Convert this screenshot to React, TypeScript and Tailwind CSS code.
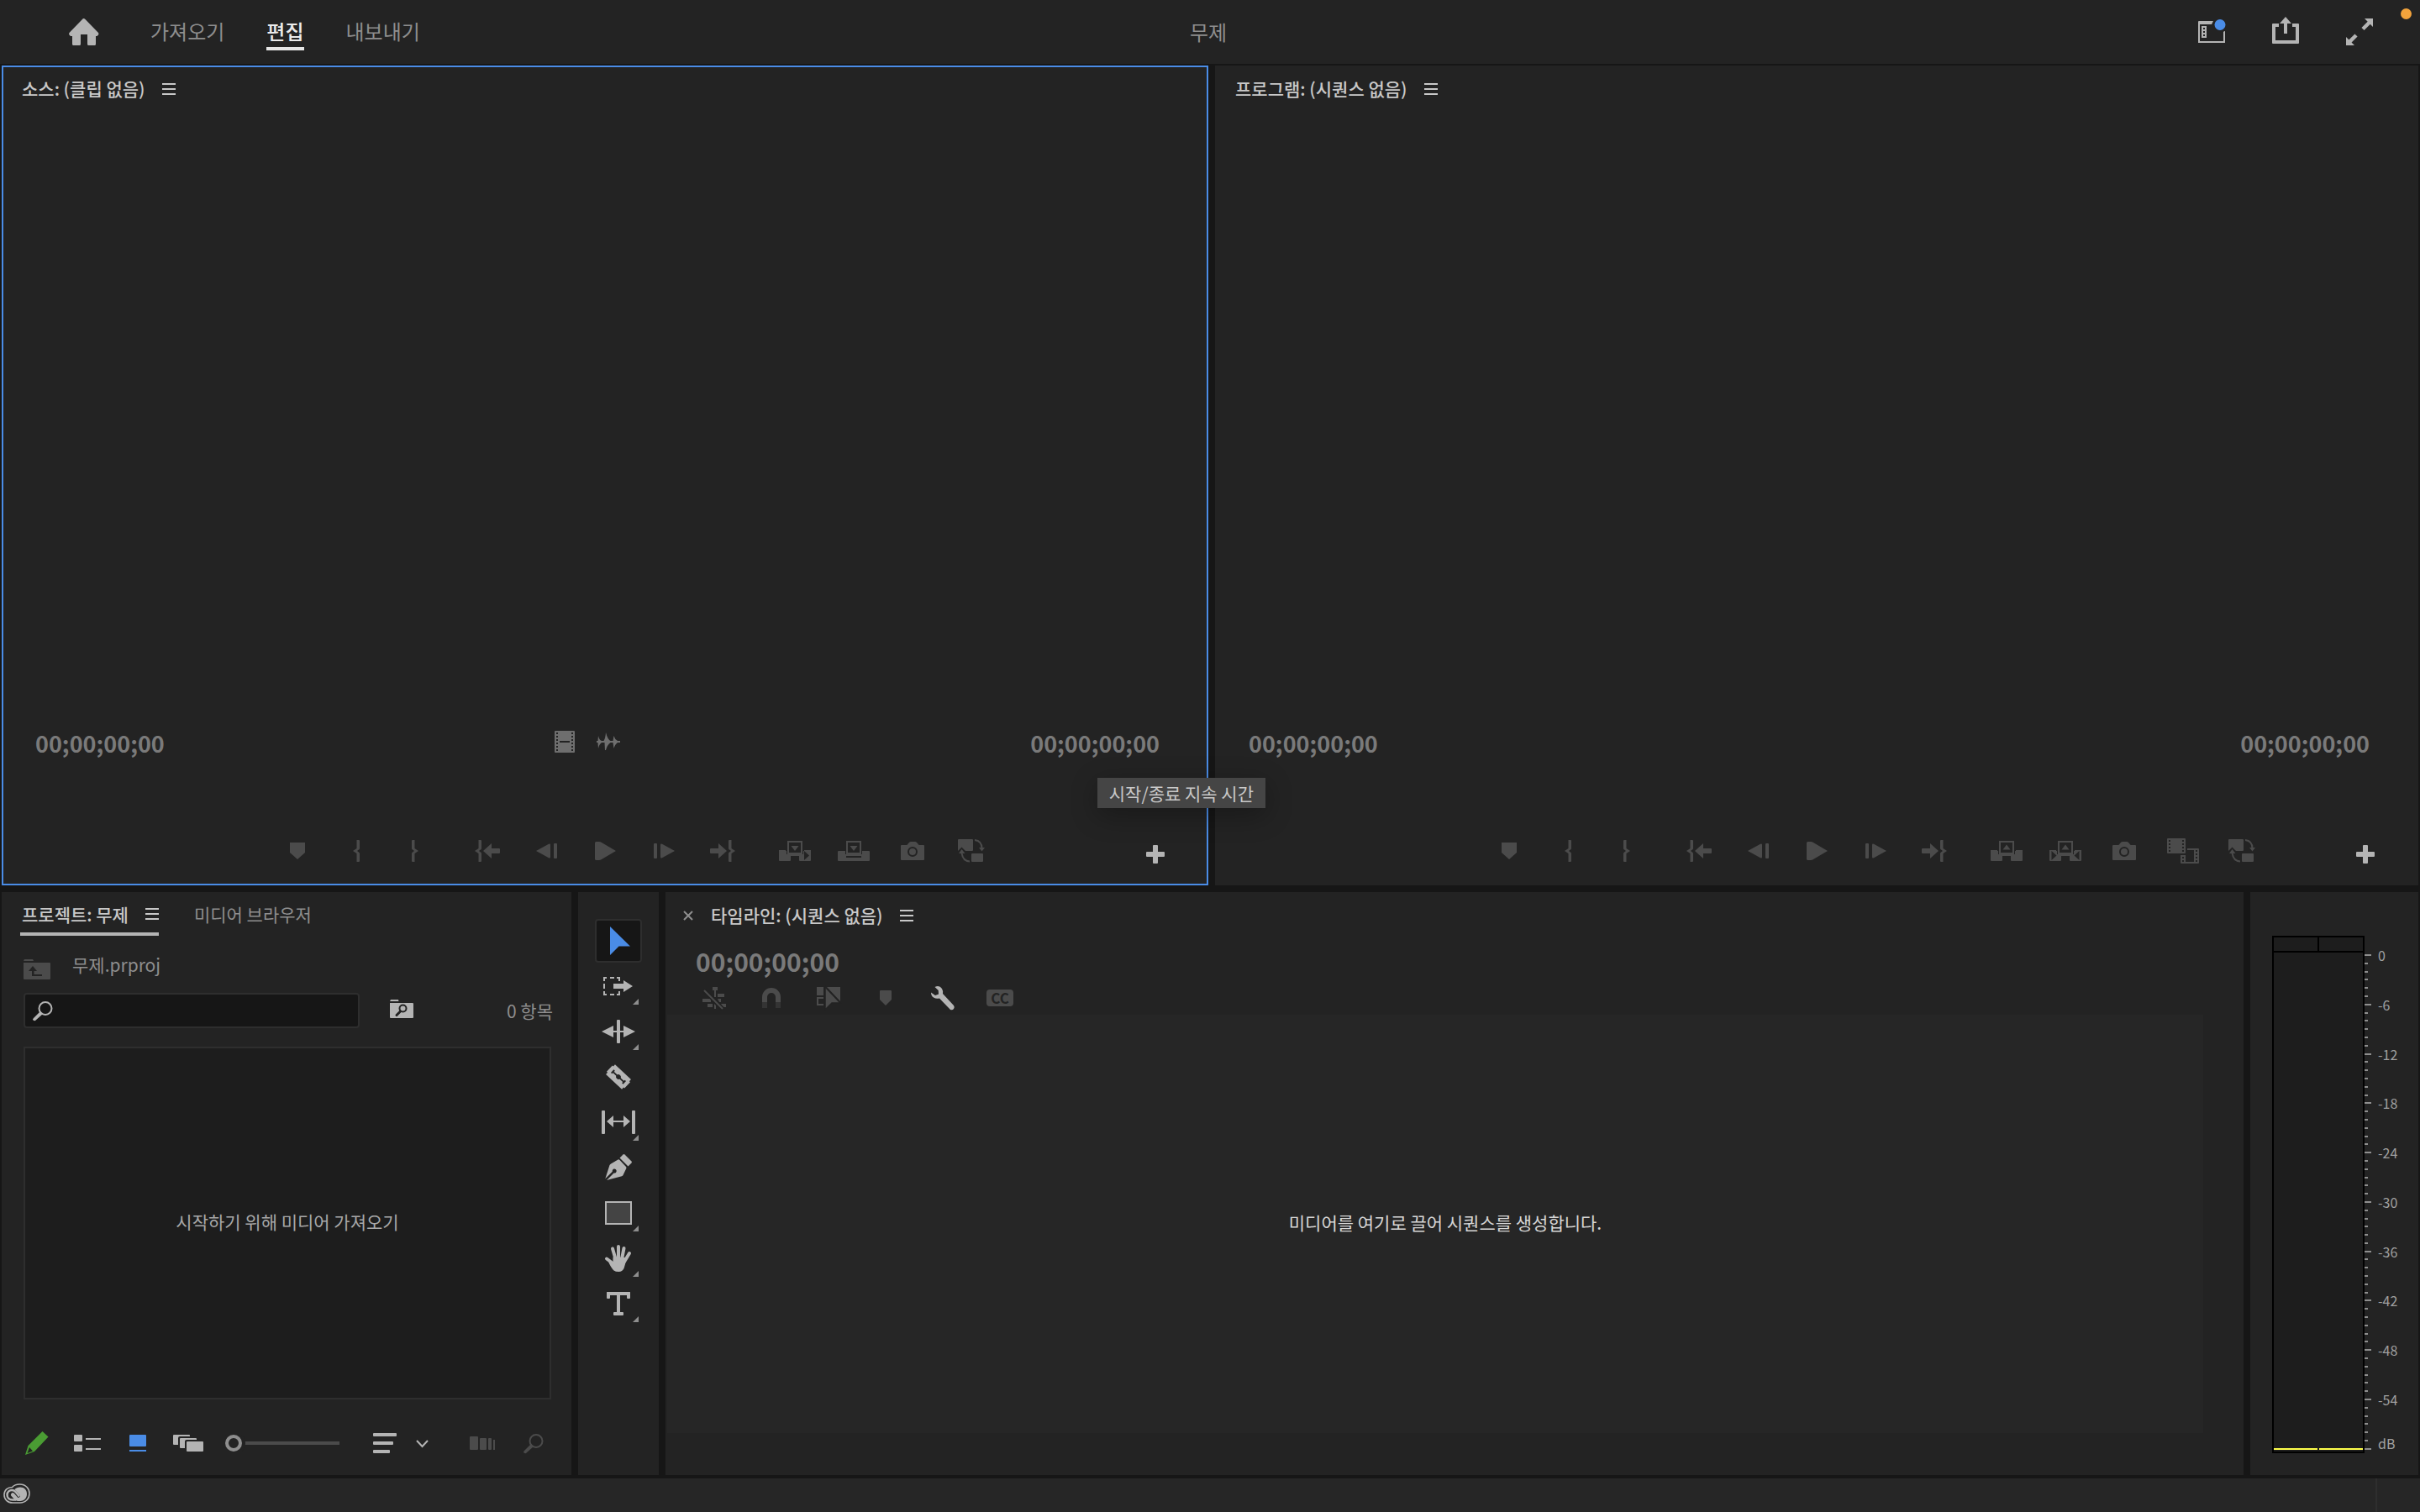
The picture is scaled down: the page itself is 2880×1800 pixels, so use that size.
import React, { useState } from 'react';

interface IconProps {
  w: number;
  h: number;
  children: React.ReactNode;
}

const Icon: React.FC<IconProps> = ({ w, h, children }) => (
  <svg width={w} height={h} viewBox={`0 0 ${w} ${h}`} fill="currentColor" className="shrink-0 overflow-visible" aria-hidden="true">
    {children}
  </svg>
);

const BG = '#232323';

/* ---------- Icons ---------- */

const HomeIcon = () => (
  <Icon w={36} h={32}>
    <path d="M17.5 0q1 0 2 1L35 17q1 1.500 0 2.500L33.500 21H32v9.500q0 1.500-1.500 1.500H23.500q-1.500 0-1.500-1.500V19h-8v11.500q0 1.500-1.500 1.500H5.500Q4 32 4 30.500V21H2L.5 19.500q-1-1 0-2.500L16 1q.7-1 1.500-1z" />
  </Icon>
);

const WorkspaceIcon = () => (
  <Icon w={32} h={26}>
    <path d="M1 0h17l-2 4H2v20h28V13q1-1 2-1v14H0V1q0-1 1-1z" />
    <path fillRule="evenodd" d="M4 6h6v14H4zM6 8v2h2V8zM6 12v2h2v-2zM6 16v2h2v-2z" />
    <circle cx="26" cy="4.500" r="6.500" fill="#4a8ce6" />
  </Icon>
);

const ShareIcon = () => (
  <Icon w={32} h={32}>
    <path d="M1 8h7v4H4v16h24V12h-4V8h7q1 0 1 1v22q0 1-1 1H1q-1 0-1-1V9q0-1 1-1z" />
    <path d="M16 0l7 8h-5v12h-4V8H9z" />
  </Icon>
);

const FullscreenIcon = () => (
  <Icon w={32} h={32}>
    <path d="M22 0h10v10zM0 22v10h10z" />
    <path d="M20 12.500L28.500 4M12 20l-8.500 8.500" stroke="currentColor" strokeWidth="4.500" />
  </Icon>
);

const MenuIcon = () => (
  <Icon w={16} h={14}>
    <path d="M0 0h16v2H0zM0 6h16v2H0zM0 12h16v2H0z" />
  </Icon>
);

const FilmIcon = () => (
  <Icon w={24} h={26}>
    <rect width="24" height="26" rx="1" />
    <g fill={BG}>
      {[2, 6, 10, 14, 18, 22].map((y) => (
        <React.Fragment key={y}>
          <rect x="2" y={y} width="2" height="2" />
          <rect x="20" y={y} width="2" height="2" />
        </React.Fragment>
      ))}
      <rect x="6" y="12" width="12" height="2" />
    </g>
  </Icon>
);

const WaveIcon = () => (
  <Icon w={28} h={22}>
    <path d="M0 10h1.500L2 4q1 5 4 6h2.500Q10.500 7 11 0q2 8 5.500 10h3L20.500 4q1 4 4.500 6h3v2h-3q-3 2-4.500 7l-1-7h-3Q12.500 15 11 21H10l-.5-9H6q-3 2-4 7l-.5-7H0z" />
  </Icon>
);

const MarkerIcon = () => (
  <Icon w={18} h={20}>
    <path d="M0 0h18v12l-9 8-9-8z" />
  </Icon>
);

const SmallMarkerIcon = () => (
  <Icon w={14} h={18}>
    <path d="M1 0h12q1 0 1 1v10l-7 7-7-7V1q0-1 1-1z" />
  </Icon>
);

const OPEN_BRACE = 'M4.500 0H7q1 0 1 1v9q0 1-1 1.500L5 13l2 1.500q1 .5 1 1.500v9q0 1-1 1H4.500V16L0 13l4.500-3z';
const CLOSE_BRACE = 'M1 0h2.500v10L8 13l-4.500 3v10H1q-1 0-1-1v-9q0-1 1-1.500L3 13l-2-1.500Q0 11 0 10V1q0-1 1-1z';

const InIcon = () => <Icon w={8} h={26}><path d={OPEN_BRACE} /></Icon>;
const OutIcon = () => <Icon w={8} h={26}><path d={CLOSE_BRACE} /></Icon>;

const GoInIcon = () => (
  <Icon w={30} h={26}>
    <path d={OPEN_BRACE} />
    <path d="M10 13l10-9v6h9q1 0 1 1v4q0 1-1 1h-9v6z" />
  </Icon>
);

const GoOutIcon = () => (
  <Icon w={30} h={26}>
    <path d={CLOSE_BRACE} transform="translate(22 0)" />
    <path d="M20 13L10 4v6H1q-1 0-1 1v4q0 1 1 1h9v6z" />
  </Icon>
);

const StepBackIcon = () => (
  <Icon w={25} h={18}>
    <path d="M0 9L15 .8q2-.8 2 1v14.400q0 1.800-2 1z" />
    <rect x="21" width="4" height="18" rx="1" />
  </Icon>
);

const StepForwardIcon = () => (
  <Icon w={25} h={18}>
    <path d="M25 9L10 .8q-2-.8-2 1v14.400q0 1.800 2 1z" />
    <rect width="4" height="18" rx="1" />
  </Icon>
);

const PlayIcon = () => (
  <Icon w={25} h={22}>
    <path d="M1.500 0H5q1.500 0 3 1l17 10L8 21q-1.500 1-3 1H1.500Q0 22 0 20.500v-19Q0 0 1.500 0z" />
  </Icon>
);

const BlocksIcon = ({ box, cuts }: { box: string; cuts?: string }) => (
  <Icon w={38} h={24}>
    <rect y="12" width="14" height="12" rx="1" />
    <rect x="24" y="12" width="14" height="12" rx="1" />
    <path d="M0 11h8v4H0zM30 11h8v4h-8z" />
    <rect x="9" y="10" width="20" height="6" fill={BG} />
    <path d="M10 14h18v4H10z" />
    <rect x="11" y="1" width="16" height="14" fill={BG} stroke="currentColor" strokeWidth="2" />
    <path d={box} />
    {cuts && <path d={cuts} fill={BG} />}
  </Icon>
);

const InsertIcon = () => <BlocksIcon box="M14.500 6h9L19 12z" cuts="M30 12l6 5.500-6 5.500z" />;
const LiftIcon = () => <BlocksIcon box="M14.500 10.500h9L19 4.500z" />;
const ExtractIcon = () => <BlocksIcon box="M14.500 10.500h9L19 4.500z" cuts="M2.500 12l6 5.500-6 5.500zM35.500 12l-6 5.500 6 5.500z" />;

const OverwriteIcon = () => (
  <Icon w={38} h={24}>
    <rect y="12" width="38" height="12" rx="1" />
    <rect x="9" y="10" width="20" height="6" fill={BG} />
    <rect x="11" y="1" width="16" height="14" fill={BG} stroke="currentColor" strokeWidth="2" />
    <path d="M14.500 6h9L19 12z" />
    <rect x="10" y="18" width="18" height="2" fill={BG} />
  </Icon>
);

const CameraIcon = () => (
  <Icon w={28} h={22}>
    <path d="M1 4h6q1 0 2-2l1-1q1-1 2-1h5q1 0 2 1l1 1q1 2 2 2h5q1 0 1 1v16q0 1-1 1H1q-1 0-1-1V5q0-1 1-1z" />
    <circle cx="14" cy="12" r="5" stroke={BG} strokeWidth="2" />
  </Icon>
);

const CompareIcon = () => (
  <Icon w={38} h={30}>
    <rect width="22" height="18" rx="1" />
    <path d="M24 12h13q1 0 1 1v16q0 1-1 1H17q-1 0-1-1v-9h6v8h10V14h-8z" />
    <g fill={BG}>
      {[2, 6, 10, 14].map((y) => (
        <React.Fragment key={y}>
          <rect x="2" y={y} width="2" height="2" />
          <rect x="18" y={y} width="2" height="2" />
          <rect x="34" y={y + 12} width="2" height="2" />
        </React.Fragment>
      ))}
      <rect x="18" y="22" width="2" height="2" />
      <rect x="18" y="26" width="2" height="2" />
    </g>
  </Icon>
);

const SwapIcon = () => (
  <Icon w={32} h={28}>
    <path d="M1 0h16q1 0 1 1v12q0 1-1 1H9L4.500 9.500 0 14V1q0-1 1-1z" />
    <rect x="16" y="17" width="14" height="10" rx="1" />
    <path d="M20 1q8.500 1 8.500 10M14 26.500Q5.500 26 4.500 16" fill="none" stroke="currentColor" strokeWidth="2" />
    <path d="M25 10h7l-3.500 4.500zM1 17h7.500L4.500 12z" />
  </Icon>
);

const PlusIcon = () => (
  <Icon w={22} h={22}>
    <path d="M9 0h4q1 0 1 1v7h7q1 0 1 1v4q0 1-1 1h-7v7q0 1-1 1H9q-1 0-1-1v-7H1q-1 0-1-1V9q0-1 1-1h7V1q0-1 1-1z" />
  </Icon>
);

const SearchIcon = () => (
  <Icon w={24} h={23}>
    <circle cx="15" cy="8.500" r="7.500" fill="none" stroke="currentColor" strokeWidth="2" />
    <path d="M9 12l3 3-9 8q-2 .5-3-1 0-1 1-2z" />
  </Icon>
);

const FolderUpIcon = () => (
  <Icon w={32} h={24}>
    <path d="M1 0h10l1 2H0zM0 4h31q1 0 1 1v18q0 1-1 1H1q-1 0-1-1z" />
    <path d="M6 14l5-6 5 6h-3.500v4H22v2H10v-6z" fill={BG} />
  </Icon>
);

const FolderSearchIcon = () => (
  <Icon w={28} h={22}>
    <path d="M1 0h9l.5 2H0zM0 4h27q1 0 1 1v16q0 1-1 1H1q-1 0-1-1z" />
    <circle cx="15.500" cy="10.500" r="4" fill="none" stroke={BG} strokeWidth="2" />
    <path d="M12.500 14L8 18.500" stroke={BG} strokeWidth="3" strokeLinecap="round" />
  </Icon>
);

const PencilIcon = () => (
  <Icon w={28} h={28}>
    <path fillRule="evenodd" d="M20.500 0L27.500 6.500 11 24 0 28l3.500-11zM5 19L2.500 26 9 23.500z" />
  </Icon>
);

const ListIcon = () => (
  <Icon w={32} h={20}>
    <rect width="10" height="8" rx="1" />
    <rect y="12" width="10" height="8" rx="1" />
    <path d="M14 4h18v2H14zM14 16h18v2H14z" />
  </Icon>
);

const GridViewIcon = () => (
  <Icon w={20} h={20}>
    <rect width="20" height="14" rx="1" />
    <rect y="18" width="20" height="2" />
  </Icon>
);

const FreeformIcon = () => (
  <Icon w={36} h={20}>
    <path d="M1 0h18q1 0 1 1v1H8q-2 0-2 2v8H1q-1 0-1-1V1q0-1 1-1z" />
    <path d="M9 4h18q1 0 1 1v1H16q-2 0-2 2v8H9q-1 0-1-1V5q0-1 1-1z" />
    <rect x="16" y="8" width="20" height="12" rx="1" />
  </Icon>
);

const SortIcon = () => (
  <Icon w={28} h={24}>
    <rect width="28" height="4" rx="1" />
    <rect y="10" width="24" height="4" rx="1" />
    <rect y="20" width="20" height="4" rx="1" />
  </Icon>
);

const ChevronIcon = () => (
  <Icon w={15} h={9}>
    <path d="M1 1l6.500 7L14 1" fill="none" stroke="currentColor" strokeWidth="2" />
  </Icon>
);

const AutomateIcon = () => (
  <Icon w={30} h={16}>
    <rect width="10" height="16" rx="1" />
    <rect x="12" y="2" width="8" height="14" rx="1" />
    <rect x="22" y="2" width="4" height="14" rx="1" />
    <rect x="28" y="4" width="2" height="12" />
  </Icon>
);

const CloudIcon = () => (
  <Icon w={32} h={24}>
    <path
      d="M10.500 4.500C13 1.500 16.500 1 19.500 1 26.500 1 31 6 31 12s-4.500 11-11 11H11C5 23 1 19 1 13.500S5 4.500 10.500 4.500z"
      fill="none"
      stroke="currentColor"
      strokeWidth="1.600"
    />
    <path d="M20 4.500c-3 0-5 1-6.500 2.500l6 7q1 1.500-.5 2.500t-2.500-.5L13 12q-2-2-3.500 0t.5 3.500l4 4.500c2 1 4 1 6 1 5 0 8-4 8-8.500s-3-8-8-8z" />
    <path d="M15 19.500H11c-4 0-6.500-2.500-6.500-6s3-5.500 5.500-5.500 4 1 5 2.500l4 5" fill="none" stroke="currentColor" strokeWidth="2.500" />
  </Icon>
);

/* ---------- Tool icons ---------- */

const SelectionTool = () => (
  <Icon w={28} h={34}>
    <path d="M4 0l24 23.500H14.500L4 34z" />
  </Icon>
);

const TrackSelectTool = () => (
  <Icon w={36} h={22}>
    <path d="M0 0h4v2H2v3H0zM8 0h5v2H8zM16 0h4v5h-2V2h-2zM0 8h2v6H0zM0 17h2v3h2v2H0zM8 20h5v2H8zM16 20h2v-3h2v5h-4z" />
    <path d="M12 8h12V4l11 7-11 7v-4H12z" />
  </Icon>
);

const RippleTool = () => (
  <Icon w={40} h={28}>
    <rect x="18" width="4" height="28" rx="1" />
    <path d="M0 14l14-7v6h12V7l14 7-14 7v-6H14v6z" />
  </Icon>
);

const RazorTool = () => (
  <Icon w={32} h={32}>
    <g transform="rotate(43 16 16)">
      <path d="M3 8h26v3h1.500v10H29v3H3v-3H1.500V11H3z" />
      <path d="M7 13.500v5M25 13.500v5M7 16h18" stroke={BG} strokeWidth="2" />
      <circle cx="16" cy="16" r="2.800" fill={BG} />
    </g>
  </Icon>
);

const SlipTool = () => (
  <Icon w={40} h={28}>
    <rect width="4" height="28" rx="1" />
    <rect x="36" width="4" height="28" rx="1" />
    <path d="M6 13l8-7v6h12V6l8 7-8 7v-6H14v6z" />
  </Icon>
);

const PenTool = () => (
  <Icon w={32} h={32}>
    <path d="M21.500 .5q1-.8 2 0l8 8q.8 1 0 2l-4 4L17.500 4.500z" />
    <path d="M15.500 6.500q1-.5 2 .5l7.500 8q.8 1 .3 2L21.500 25q-.5 1-1.500 1.300L2 31l8.500-8.500a2.500 2.500 0 1 0-1.700-1.700L.3 29.300 5.500 13q.5-1 1.500-1.500z" />
  </Icon>
);

const RectangleTool = () => (
  <Icon w={32} h={28}>
    <rect x="1" y="1" width="30" height="26" fill="#444444" stroke="currentColor" strokeWidth="2" />
  </Icon>
);

const HandTool = () => (
  <Icon w={32} h={32}>
    <path
      d="M2 16.500l8 6M9 4.500l3.500 12M16 2v14M22.500 4L20 17M29 10l-6 10"
      fill="none"
      stroke="currentColor"
      strokeWidth="4"
      strokeLinecap="round"
    />
    <path d="M9.500 14.500L24.500 15q1 3-.5 8l-1.500 5q-2 4-6 4t-6-1.500Q7 27 4 20l5.500 1.500z" />
  </Icon>
);

const TypeTool = () => (
  <Icon w={28} h={28}>
    <rect width="28" height="4" rx="1" />
    <rect width="4" height="8" rx="1" />
    <rect x="24" width="4" height="8" rx="1" />
    <rect x="12" y="2" width="4" height="24" />
    <rect x="8" y="24" width="12" height="4" rx="1" />
  </Icon>
);

/* ---------- Timeline icons ---------- */

const NestIcon = () => (
  <Icon w={28} h={26}>
    <path d="M12 0h6v4h-2v8h-2V4h-2zM18 8h8v4h-8zM0 14h10v4H0zM18 14h4v4h-2zM6 20h6v4H6zM14 20l2 2v4h-2zM22 20h6v4h-4z" />
    <path d="M2 4l22 22" stroke={BG} strokeWidth="5" />
    <path d="M2 4l22 22" stroke="currentColor" strokeWidth="2" />
  </Icon>
);

const MagnetIcon = () => (
  <Icon w={22} h={24}>
    <path d="M0 17V11a11 11 0 0 1 22 0v6h-6v-6a5 5 0 0 0-10 0v6z" />
    <path d="M0 17h6v7H0zM16 17h6v7h-6z" fill="#343434" />
  </Icon>
);

const LinkedIcon = () => (
  <Icon w={28} h={27}>
    <path d="M0 0h8v10H0zM12 0h16v17z" />
    <path d="M8 13H1v8h7" fill="none" stroke="currentColor" strokeWidth="2" />
    <path d="M10 0l18 19H18l-8 8z" stroke={BG} strokeWidth="1.500" />
  </Icon>
);

const WrenchIcon = () => (
  <Icon w={28} h={29}>
    <path d="M4.500 1Q10-1.500 13 3q1.500 2.500 1 6l13 14q1.500 2 0 4t-4 1L10 14.500q-4 1-7-1-3-2-3-6l5 3.500 4-1.500-.3-4.500z" />
  </Icon>
);

const transportButtons = [
  { label: '시작 지점으로 이동', icon: <GoInIcon /> },
  { label: '1프레임 이전 단계', icon: <StepBackIcon /> },
  { label: '재생/중지 토글', icon: <PlayIcon /> },
  { label: '1프레임 다음 단계', icon: <StepForwardIcon /> },
  { label: '종료 지점으로 이동', icon: <GoOutIcon /> },
];

const markButtons = [
  { label: '마커 추가', icon: <MarkerIcon /> },
  { label: '시작 표시', icon: <InIcon /> },
  { label: '종료 표시', icon: <OutIcon /> },
];

const sourceButtons = [
  { label: '삽입', icon: <InsertIcon /> },
  { label: '덮어쓰기', icon: <OverwriteIcon /> },
  { label: '프레임 내보내기', icon: <CameraIcon /> },
  { label: '프록시 전환', icon: <SwapIcon /> },
];

const programButtons = [
  { label: '제거', icon: <LiftIcon /> },
  { label: '추출', icon: <ExtractIcon /> },
  { label: '프레임 내보내기', icon: <CameraIcon /> },
  { label: '비교 보기', icon: <CompareIcon /> },
  { label: '프록시 전환', icon: <SwapIcon /> },
];

const tools = [
  { label: '선택 도구', icon: <SelectionTool />, more: false },
  { label: '앞으로 트랙 선택 도구', icon: <TrackSelectTool />, more: true },
  { label: '잔물결 편집 도구', icon: <RippleTool />, more: true },
  { label: '자르기 도구', icon: <RazorTool />, more: false },
  { label: '밀어넣기 도구', icon: <SlipTool />, more: true },
  { label: '펜 도구', icon: <PenTool />, more: false },
  { label: '사각형 도구', icon: <RectangleTool />, more: true },
  { label: '손 도구', icon: <HandTool />, more: true },
  { label: '문자 도구', icon: <TypeTool />, more: true },
];

const timelineButtons = [
  { label: '시퀀스 중첩', icon: <NestIcon /> },
  { label: '스냅', icon: <MagnetIcon /> },
  { label: '연결된 선택', icon: <LinkedIcon /> },
  { label: '마커 추가', icon: <SmallMarkerIcon /> },
];

interface ButtonItem {
  label: string;
  icon: React.ReactNode;
}

const ButtonGroup: React.FC<{ items: ButtonItem[] }> = ({ items }) => (
  <div className="flex">
    {items.map((item) => (
      <button key={item.label} aria-label={item.label} className="flex h-10 w-[70px] items-center justify-center">
        {item.icon}
      </button>
    ))}
  </div>
);

interface MonitorProps {
  title: string;
  active?: boolean;
  buttons: ButtonItem[];
  children?: React.ReactNode;
}

const Monitor: React.FC<MonitorProps> = ({ title, active, buttons, children }) => (
  <section className={`flex min-w-0 flex-col border-2 bg-[#232323] ${active ? 'border-[#4a8ce6]' : 'border-[#232323]'}`}>
    <div className="flex h-[52px] items-center gap-5 pl-[22px] text-[#c8c8c8]">
      <h2 className="pb-0.5 text-[21px] leading-7 font-medium">{title}</h2>
      <button aria-label="패널 메뉴">
        <MenuIcon />
      </button>
    </div>
    <div className="flex-1" />
    <div className="flex h-10 items-center justify-between pr-14 pl-[38px] text-[27px] leading-10 font-bold text-[#7a7a7a]">
      <span>00;00;00;00</span>
      {children}
      <span>00;00;00;00</span>
    </div>
    <div className="mt-[88px] mb-[19px] flex items-center text-[#4b4b4b]">
      <div className="flex flex-1 justify-end pr-4">
        <ButtonGroup items={markButtons} />
      </div>
      <ButtonGroup items={transportButtons} />
      <div className="flex flex-1 items-center pl-4">
        <ButtonGroup items={buttons} />
        <button aria-label="단추 편집기" className="mt-2 mr-[41px] ml-auto flex h-8 w-10 items-center justify-center text-[#b4b4b4]">
          <PlusIcon />
        </button>
      </div>
    </div>
  </section>
);

const ProjectPanel = () => {
  const [query, setQuery] = useState('');
  const [zoom, setZoom] = useState(0);

  return (
    <section className="flex min-w-0 flex-col bg-[#232323] pr-6 pl-[26px] text-[21px] leading-7 text-[#8e8e8e]">
      <div className="-ml-1 flex h-[52px] items-end">
        <div className="flex h-10 items-start gap-5 border-b-4 border-[#b4b4b4] pl-0.5 text-[#c8c8c8]">
          <button className="font-medium">프로젝트: 무제</button>
          <button aria-label="패널 메뉴" className="flex h-7 items-center">
            <MenuIcon />
          </button>
        </div>
        <button className="mb-3 ml-[42px]">미디어 브라우저</button>
      </div>

      <div className="mt-4 flex items-center gap-[26px]">
        <button aria-label="상위 저장소" className="mt-3 text-[#4b4b4b]">
          <FolderUpIcon />
        </button>
        <span>무제.prproj</span>
      </div>

      <div className="mt-4 flex items-center">
        <label className="flex h-[42px] w-[400px] items-center gap-2 rounded border-2 border-[#2e2e2e] bg-[#161616] px-[9px] text-[#b4b4b4]">
          <SearchIcon />
          <input
            aria-label="검색"
            value={query}
            onChange={(e) => setQuery(e.target.value)}
            className="min-w-0 flex-1 bg-transparent outline-none"
          />
        </label>
        <button aria-label="쿼리에서 검색 저장소 만들기" className="ml-9 pb-1 text-[#b4b4b4]">
          <FolderSearchIcon />
        </button>
        <span className="-mr-0.5 ml-auto">0 항목</span>
      </div>

      <div className="mt-[22px] flex flex-1 items-center justify-center border-2 border-[#2e2e2e] bg-[#1d1d1d] pb-1 text-[#a8a8a8]">
        시작하기 위해 미디어 가져오기
      </div>

      <div className="flex h-[90px] items-center pt-3.5 text-[#b4b4b4]">
        <button aria-label="쓰기 가능" className="ml-0.5 text-[#4a9c33]"><PencilIcon /></button>
        <button aria-label="목록 보기" className="ml-[30px]"><ListIcon /></button>
        <button aria-label="아이콘 보기" className="ml-[34px] text-[#4a8ce6]"><GridViewIcon /></button>
        <button aria-label="자유형 보기" className="ml-8"><FreeformIcon /></button>
        <input
          type="range"
          aria-label="아이콘 크기"
          value={zoom}
          onChange={(e) => setZoom(Number(e.target.value))}
          className="ml-[26px] h-5 w-[136px] appearance-none overflow-hidden bg-transparent [&::-webkit-slider-runnable-track]:h-5 [&::-webkit-slider-runnable-track]:bg-[linear-gradient(#4b4b4b,#4b4b4b)] [&::-webkit-slider-runnable-track]:bg-[length:100%_4px] [&::-webkit-slider-runnable-track]:bg-center [&::-webkit-slider-runnable-track]:bg-no-repeat [&::-webkit-slider-thumb]:size-5 [&::-webkit-slider-thumb]:appearance-none [&::-webkit-slider-thumb]:rounded-full [&::-webkit-slider-thumb]:border-4 [&::-webkit-slider-thumb]:border-[#8e8e8e] [&::-webkit-slider-thumb]:bg-[#232323] [&::-webkit-slider-thumb]:shadow-[0_0_0_4px_#232323]"
        />
        <button aria-label="정렬" className="ml-10 flex items-center gap-[23px]">
          <SortIcon />
          <ChevronIcon />
        </button>
        <div className="ml-auto flex items-center gap-[34px] pr-[9px] text-[#4b4b4b]">
          <button aria-label="시퀀스 자동화"><AutomateIcon /></button>
          <button aria-label="찾기"><SearchIcon /></button>
        </div>
      </div>
    </section>
  );
};

const ToolsPanel = () => {
  const [active, setActive] = useState('선택 도구');

  return (
    <section className="flex flex-col items-center gap-0.5 bg-[#232323] pt-8">
      {tools.map((tool) => (
        <button
          key={tool.label}
          aria-label={tool.label}
          onClick={() => setActive(tool.label)}
          className={`relative flex h-[52px] w-14 items-center justify-center rounded border-2 ${
            active === tool.label ? 'border-[#2e2e2e] bg-[#161616] text-[#4a8ce6]' : 'border-transparent text-[#b4b4b4]'
          }`}
        >
          {tool.icon}
          {tool.more && (
            <svg width="7" height="7" className="absolute right-0.5 bottom-0.5" fill="#8e8e8e" aria-hidden="true">
              <path d="M7 0v7H0z" />
            </svg>
          )}
        </button>
      ))}
    </section>
  );
};

const TimelinePanel = () => (
  <section className="flex min-w-0 flex-col bg-[#232323]">
    <div className="flex h-14 items-center pl-[22px] text-[#c8c8c8]">
      <button aria-label="닫기" className="text-[#8e8e8e]">
        <Icon w={10} h={10}>
          <path d="M0 0l10 10M10 0L0 10" stroke="currentColor" strokeWidth="2" />
        </Icon>
      </button>
      <h2 className="ml-[22px] pb-0.5 text-[21px] leading-7 font-medium">타임라인: (시퀀스 없음)</h2>
      <button aria-label="패널 메뉴" className="ml-5">
        <MenuIcon />
      </button>
    </div>
    <div className="mt-1.5 pl-9 text-[30px] leading-10 font-bold text-[#7a7a7a]">00;00;00;00</div>
    <div className="mt-1 flex h-10 items-center pl-6 text-[#4b4b4b]">
      {timelineButtons.map((item) => (
        <button key={item.label} aria-label={item.label} className="flex h-10 w-[68px] items-center justify-center">
          {item.icon}
        </button>
      ))}
      <button aria-label="타임라인 표시 설정" className="flex h-10 w-[68px] items-center justify-center text-[#b4b4b4]">
        <WrenchIcon />
      </button>
      <button aria-label="캡션 트랙 옵션" className="flex h-10 w-[68px] items-center justify-center">
        <span className="flex h-5 w-8 items-center justify-center rounded bg-[#4b4b4b] text-[17px] leading-5 font-bold text-[#232323]">
          CC
        </span>
      </button>
    </div>
    <div className="mr-12 mb-[50px] ml-0.5 flex flex-1 items-center justify-center bg-[#262626] pb-1 pl-6 text-[21px] leading-7 text-[#d6d6d6]">
      미디어를 여기로 끌어 시퀀스를 생성합니다.
    </div>
  </section>
);

const MeterPanel = () => {
  const ticks = Array.from({ length: 61 }, (_, i) => i);

  return (
    <section className="flex bg-[#232323] pt-[52px] pb-[26px] pl-[26px]">
      <div className="flex w-[110px] flex-col border-2 border-black bg-[#1d1d1d]">
        <div className="grid h-[18px] grid-cols-2 gap-0.5 border-b-2 border-black bg-black">
          <div className="bg-[#1d1d1d]" />
          <div className="bg-[#1d1d1d]" />
        </div>
        <div className="mt-auto mb-0.5 grid grid-cols-2 gap-0.5">
          <div className="h-0.5 bg-[#ffff4a]" />
          <div className="h-0.5 bg-[#ffff4a]" />
        </div>
      </div>
      <div className="mt-[22px] mb-1 flex flex-col justify-between text-base leading-4 text-[#a0a0a0]">
        {ticks.map((db) => (
          <div key={db} className={`flex h-0.5 gap-2 ${db === 60 ? 'items-end' : 'items-center'}`}>
            <span className={`h-0.5 bg-[#8e8e8e] ${db % 6 === 0 ? 'w-2' : 'w-1'}`} />
            {db % 6 === 0 && <span>{db === 60 ? 'dB' : db === 0 ? '0' : `-${db}`}</span>}
          </div>
        ))}
      </div>
    </section>
  );
};

const Header = () => (
  <header className="relative grid h-[76px] shrink-0 grid-cols-[1fr_auto_1fr] items-center bg-[#232323] text-2xl leading-8 text-[#8e8e8e]">
    <nav className="flex items-center pl-[82px]">
      <button aria-label="홈" className="text-[#b4b4b4]">
        <HomeIcon />
      </button>
      <div className="ml-[61px] flex gap-[50px] pt-1">
        <button className="h-10 border-b-4 border-transparent pb-0.5">가져오기</button>
        <button className="h-10 border-b-4 border-[#e6e6e6] pb-0.5 font-medium text-[#ebebeb]">편집</button>
        <button className="h-10 border-b-4 border-transparent pb-0.5">내보내기</button>
      </div>
    </nav>
    <h1 className="pr-1">무제</h1>
    <div className="flex justify-end pr-7 text-[#b4b4b4]">
      <button aria-label="작업 영역" className="flex h-10 w-[88px] items-center justify-center"><WorkspaceIcon /></button>
      <button aria-label="빠른 내보내기" className="flex h-10 w-[88px] items-center justify-center pb-1"><ShareIcon /></button>
      <button aria-label="전체 화면" className="flex h-10 w-[88px] items-center justify-center"><FullscreenIcon /></button>
    </div>
    <span className="absolute top-2.5 right-2.5 size-[13px] rounded-full bg-[#f2a33c]" />
  </header>
);

export default function App() {
  return (
    <div className="flex h-screen flex-col bg-[#161616] font-['Noto_Sans_CJK_KR',sans-serif]">
      <Header />

      <main className="grid min-h-0 flex-1 grid-rows-[976fr_694fr] gap-2 px-0.5 pt-0.5 pb-1">
        <div className="relative grid grid-cols-[1436fr_1432fr] gap-2">
          <Monitor title="소스: (클립 없음)" active buttons={sourceButtons}>
            <div className="flex items-center gap-[26px] pr-6 pb-1 text-[#6e6e6e]">
              <button aria-label="비디오만 드래그"><FilmIcon /></button>
              <button aria-label="오디오만 드래그"><WaveIcon /></button>
            </div>
          </Monitor>
          <Monitor title="프로그램: (시퀀스 없음)" buttons={programButtons} />

          {/* Tooltip over the duration readout */}
          <div
            role="tooltip"
            className="absolute right-[1372px] bottom-[92px] flex h-9 items-center bg-[#454545] px-3.5 text-[21px] leading-7 text-[#c8c8c8] shadow-[0_8px_32px_rgba(0,0,0,0.3)]"
          >
            시작/종료 지속 시간
          </div>
        </div>

        <div className="grid min-h-0 grid-cols-[678fr_96px_1878fr_200px] gap-2">
          <ProjectPanel />
          <ToolsPanel />
          <TimelinePanel />
          <MeterPanel />
        </div>
      </main>

      <footer className="flex h-10 shrink-0 items-center justify-between bg-[#262626] pl-1 text-[#b4b4b4]">
        <button aria-label="Creative Cloud" className="pb-1">
          <CloudIcon />
        </button>
        <div className="mr-[51px] h-full w-0.5 bg-[#2e2e2e]" />
      </footer>
    </div>
  );
}
